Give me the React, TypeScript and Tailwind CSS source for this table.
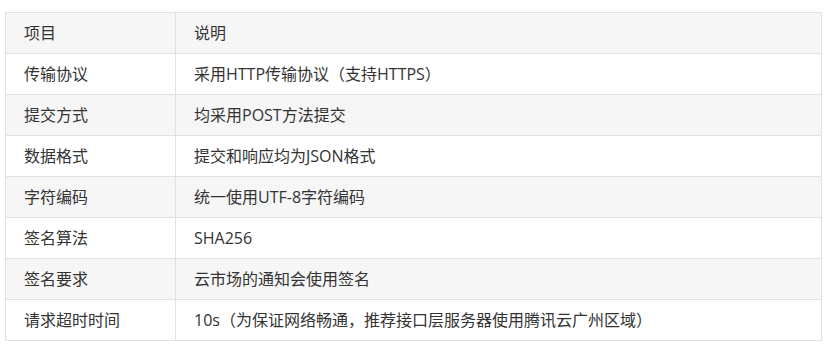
const rows: [string, string][] = [
  ['传输协议', '采用HTTP传输协议（支持HTTPS）'],
  ['提交方式', '均采用POST方法提交'],
  ['数据格式', '提交和响应均为JSON格式'],
  ['字符编码', '统一使用UTF-8字符编码'],
  ['签名算法', 'SHA256'],
  ['签名要求', '云市场的通知会使用签名'],
  ['请求超时时间', '10s（为保证网络畅通，推荐接口层服务器使用腾讯云广州区域）'],
];

export default function App() {
  return (
    <div className="min-h-screen bg-white pl-[5px] pr-[4px] pt-[12px] font-['Open_Sans','Noto_Sans_CJK_SC',sans-serif] text-[16px] text-[#333]">
      <table className="w-full border-collapse">
        <thead>
          <tr className="bg-[#f6f6f6]">
            <th className="h-[41px] w-[170px] border border-[#dfe2e5] px-[18px] text-left font-normal">项目</th>
            <th className="h-[41px] border border-[#dfe2e5] px-[18px] text-left font-normal">说明</th>
          </tr>
        </thead>
        <tbody>
          {rows.map(([k, v], i) => (
            <tr key={k} className={i % 2 === 1 ? 'bg-[#f6f6f6]' : 'bg-white'}>
              <td className="h-[41px] border border-[#dfe2e5] px-[18px]">{k}</td>
              <td className="h-[41px] border border-[#dfe2e5] px-[18px]">{v}</td>
            </tr>
          ))}
        </tbody>
      </table>
    </div>
  );
}
